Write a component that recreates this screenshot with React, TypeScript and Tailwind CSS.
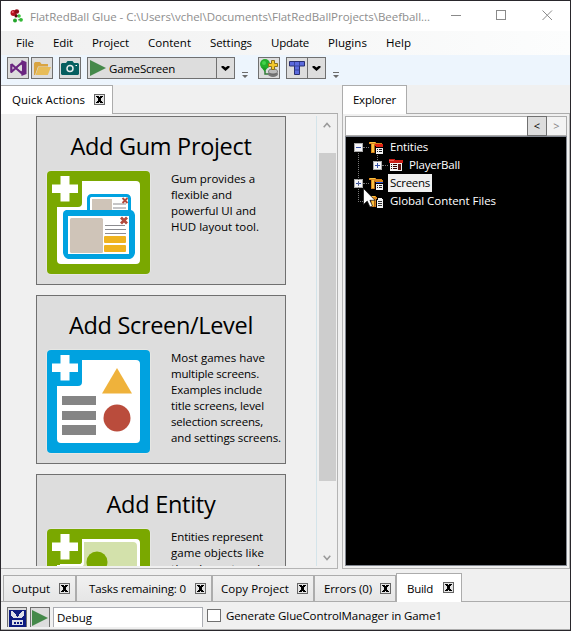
import { useLayoutEffect, useRef, type ReactNode } from "react";

/** One line of text whose tracking is fitted to a given width. */
function Fit({ w, className = "", children }: { w: number; className?: string; children: string }) {
  const ref = useRef<HTMLSpanElement>(null);
  useLayoutEffect(() => {
    const el = ref.current;
    if (!el) return;
    el.style.letterSpacing = "0px";
    const natural = el.getBoundingClientRect().width;
    el.style.letterSpacing = `${(w - natural) / children.length}px`;
  }, [w, children]);
  return (
    <span ref={ref} className={`inline-block shrink-0 whitespace-pre ${className}`}>
      {children}
    </span>
  );
}

function CloseBox() {
  return (
    <span className="flex h-[11px] w-[11px] shrink-0 items-center justify-center border border-[#666] bg-[#e4e4e4]">
      <svg width="7" height="7" viewBox="0 0 7 7" shapeRendering="crispEdges">
        <path d="M0 0h3v1h1V0h3v1H6v1H5v3h1v1h1v1H4V6H3v1H0V6h1V5h1V2H1V1H0z" fill="#000" />
      </svg>
    </span>
  );
}

function ToolButton({ children, className = "" }: { children: ReactNode; className?: string }) {
  return (
    <div className={`flex h-[22px] shrink-0 items-center justify-center border border-[#707070] bg-[#ddd] ${className}`}>
      {children}
    </div>
  );
}

function DropArrow() {
  return (
    <svg width="9" height="5" viewBox="0 0 9 5">
      <path d="M.5 0h2l2 1.600L6.500 0h2v1.500L4.500 5l-4-3.500z" fill="#000" />
    </svg>
  );
}

function Overflow({ className = "" }: { className?: string }) {
  return (
    <svg className={className} width="7" height="7" viewBox="0 0 7 7">
      <path d="M0 0h6v1H0zM0 3h6L3 6z" fill="#6b6b6b" />
    </svg>
  );
}

function Play() {
  return (
    <svg className="shrink-0" width="16" height="16" viewBox="0 0 16 16">
      <path d="M0 0v16l16-8z" fill="#45894a" />
    </svg>
  );
}

function TitleBar() {
  return (
    <div className="flex h-[30px] items-center bg-white pl-[9px] pb-px">
      <svg width="13" height="14" viewBox="0 0 13 14">
        <path d="M5 4l4 4M8 11l3-1" stroke="#666" strokeWidth="1" />
        <circle cx="3.500" cy="4" r="3" fill="#b51220" />
        <circle cx="6.800" cy="2.500" r="2.300" fill="#8d0c17" />
        <circle cx="2.800" cy="3" r="1" fill="#ec6770" />
        <circle cx="9" cy="7" r="1.800" fill="#38c43c" />
        <circle cx="5" cy="11.500" r="2" fill="#24a52c" />
        <circle cx="11" cy="10.800" r="1.900" fill="#32b936" />
        <circle cx="6" cy="7" r="1.500" fill="#5d0a10" />
      </svg>
      <Fit w={400} className="ml-[7px] mt-[2px] text-[11.5px] leading-4 text-[#8e8e8e]">
        {"FlatRedBall Glue - C:\\Users\\vchel\\Documents\\FlatRedBallProjects\\Beefball..."}
      </Fit>
      <svg className="ml-[21px]" width="102" height="11" viewBox="0 0 102 11" fill="none" stroke="#8a8a8a">
        <path d="M0 5.500h10M45.500.5h9v9h-9z" shapeRendering="crispEdges" />
        <path d="M91.500.5l9.500 9.500M101 .5l-9.500 9.500" />
      </svg>
    </div>
  );
}

function MenuBar() {
  return (
    <div className="flex h-6 items-center bg-gradient-to-r from-[#f0f0f0] to-[#fcfdfd] pl-[15px] text-[11.5px] leading-4">
      <Fit w={18}>File</Fit>
      <Fit w={20} className="ml-[19px]">Edit</Fit>
      <Fit w={37} className="ml-[19px]">Project</Fit>
      <Fit w={43} className="ml-[19px]">Content</Fit>
      <Fit w={42} className="ml-[19px]">Settings</Fit>
      <Fit w={38} className="ml-[19px]">Update</Fit>
      <Fit w={39} className="ml-[19px]">Plugins</Fit>
      <Fit w={25} className="ml-[19px]">Help</Fit>
    </div>
  );
}

function ToolBar() {
  return (
    <div className="flex h-[30px] items-start bg-[#edf5fd] pl-[6px] pt-[2px]">
      <ToolButton className="w-[22px]">
        <svg width="17" height="16" viewBox="0 0 17 16">
          <path d="M1.300 4v8L12 2.500v11L1.300 4" fill="none" stroke="#6b2680" strokeWidth="2.200" strokeLinejoin="round" />
          <path d="M11.500 0L16.500 2v12l-5 2z" fill="#6b2680" />
          <path d="M12 4.500L8 8l4 3.500z" fill="#ddd" />
        </svg>
      </ToolButton>
      <ToolButton className="ml-[2px] w-[22px]">
        <svg width="17" height="13" viewBox="0 0 17 13">
          <path d="M0 13V1.500L1 0h5l1.500 2H14v2.500H4L1 13z" fill="#d9a441" />
          <path d="M4.500 5H17l-3.200 8H1.500z" fill="#e8bc57" />
        </svg>
      </ToolButton>
      <ToolButton className="ml-[6px] w-[22px]">
        <svg width="18" height="14" viewBox="0 0 18 14">
          <path d="M1 2h4l1.500-2h5L13 2h4l1 1v10l-1 1H1l-1-1V3z" fill="#075f60" />
          <circle cx="9" cy="7.500" r="3" fill="none" stroke="#e8eded" strokeWidth="1.500" />
          <path d="M14.500 4h1.500v1h-1.500z" fill="#fff" />
        </svg>
      </ToolButton>
      <ToolButton className="ml-[6px] w-[148px]">
        <div className="flex h-full w-[129px] shrink-0 items-center border-r border-[#707070] pl-[2px]">
          <Play />
          <Fit w={66} className="ml-[3px] mt-[2px] text-[11.5px] leading-4">GameScreen</Fit>
        </div>
        <div className="flex flex-1 justify-center"><DropArrow /></div>
      </ToolButton>
      <Overflow className="ml-[7px] mt-[15px]" />
      <ToolButton className="ml-[9px] w-[22px]">
        <svg width="20" height="19" viewBox="0 0 20 19">
          <circle cx="6" cy="5" r="5" fill="#23ae2b" />
          <circle cx="5" cy="4" r="2" fill="#43d34a" />
          <path d="M2 8l4 5 2-4z" fill="#1d9a25" />
          <path d="M6 12v3h5" fill="none" stroke="#347c3a" strokeWidth="1.500" />
          <ellipse cx="14" cy="15" rx="5" ry="3" fill="#777" />
          <ellipse cx="14" cy="12.500" rx="4.500" ry="2.500" fill="#bbb" stroke="#555" strokeWidth=".7" />
          <path d="M12.500 1.500h3v3h3v3h-3v3h-3v-3h-3v-3h3z" fill="#f3c72c" stroke="#8c721c" />
        </svg>
      </ToolButton>
      <ToolButton className="ml-[6px] w-[40px]">
        <div className="flex h-full w-[21px] items-center justify-center border-r border-[#707070]">
          <svg width="16" height="14" viewBox="0 0 16 14">
            <path d="M.5.500h15v4.500h-5v8.500h-5V5h-5z" fill="#5b6ade" stroke="#292f70" />
            <path d="M5.500 1v4h5V1M5.500 9h5" fill="none" stroke="#39449d" />
          </svg>
        </div>
        <div className="flex flex-1 justify-center"><DropArrow /></div>
      </ToolButton>
      <Overflow className="ml-[7px] mt-[15px]" />
    </div>
  );
}

function PlusFrame({ color, children }: { color: string; children: ReactNode }) {
  return (
    <svg width="105" height="105" viewBox="0 0 105 105">
      <rect x=".5" y=".5" width="104" height="104" rx="4.500" fill="#eef0ea" />
      <rect x="1" y="1" width="103" height="103" rx="4" fill={color} />
      <path d="M36 11h54q4 0 4 4v75q0 4-4 4H15q-4 0-4-4V37h21q4 0 4-4z" fill="#fff" />
      <path d="M14.500 6h9v8.500H32v8.500h-8.500v8.500h-9V23H6v-8.500h8.500z" fill="#fff" />
      {children}
    </svg>
  );
}

function GumIcon() {
  return (
    <PlusFrame color="#7aa800">
      <rect x="42.500" y="25.500" width="41" height="30" rx="3" fill="#fff" stroke="#00a2e0" strokeWidth="3" />
      <path d="M46 29h20v14H46z" fill="#cfc4b8" />
      <path d="M67 34h13M67 38h13" stroke="#8c8c90" />
      <path d="M76.500 28l5 5M81.500 28l-5 5" stroke="#b34a3c" strokeWidth="1.800" />
      <path d="M20 40h64q4 0 5 5v38q-1 5-5 6H22q-4-1-5-6V44q0-3 3-4z" fill="#00a2e0" />
      <path d="M22 46h61v38H22z" fill="#fff" />
      <rect x="24" y="48" width="33" height="35" rx="1.500" fill="#cfc4b8" />
      <path d="M59 55.500h20M59 59.500h21M59 63.500h21" stroke="#8c8c90" />
      <path d="M75 47.500l6 6M81 47.500l-6 6" stroke="#b34a3c" strokeWidth="2.800" />
      <rect x="58" y="66" width="22" height="7" rx="1" fill="#efb31f" />
      <rect x="58" y="75" width="22" height="7" rx="1" fill="#efb31f" />
    </PlusFrame>
  );
}

function ScreenIcon() {
  return (
    <PlusFrame color="#00a2e0">
      <path d="M71 19l15 25.500H56z" fill="#efb23b" />
      <circle cx="71" cy="69" r="13.500" fill="#ba4c3c" />
      <path d="M16 47h34v9H16zM16 62h34v9H16zM16 76h34v10H16z" fill="#858585" />
    </PlusFrame>
  );
}

function EntityIcon() {
  return (
    <PlusFrame color="#7aa800">
      <path d="M38 14h49q4 0 4 4v73H14V39h20q4 0 4-4z" fill="#d3e1ab" />
      <path d="M14 36h20q3-1 3-4v4q0 3-3 3H14z" fill="#fff" />
      <circle cx="51" cy="34" r="10.500" fill="#7aa800" />
    </PlusFrame>
  );
}

type Line = [string, number];

function Card({ title, titleWidth, icon, lines }: { title: string; titleWidth: number; icon: ReactNode; lines: Line[] }) {
  return (
    <div className="h-[169px] w-[250px] shrink-0 border border-[#707070] bg-[#ddd]">
      <div className="flex h-[53px] justify-center pt-[13px]">
        <Fit w={titleWidth} className="text-[23.5px] leading-8">{title}</Fit>
      </div>
      <div className="flex">
        <div className="ml-[9px] w-[105px] shrink-0">{icon}</div>
        <div className="ml-[20px] mt-px flex flex-col items-start text-[11.5px] leading-4">
          {lines.map(([text, w]) => <Fit key={text} w={w}>{text}</Fit>)}
        </div>
      </div>
    </div>
  );
}

function QuickActions() {
  return (
    <div className="flex w-[337px] shrink-0 flex-col">
      <div className="flex h-[29px] shrink-0">
        <div className="flex w-[112px] items-center border-t border-r border-[#acacac] bg-white pl-[11px]">
          <Fit w={73} className="text-[11.5px] leading-4">Quick Actions</Fit>
          <div className="ml-[9px] -mt-px"><CloseBox /></div>
        </div>
        <div className="flex-1 border-b border-[#acacac]" />
      </div>
      <div className="flex h-[455px] border-r border-b border-[#b4b4b4] pt-[2px] pb-[2px]">
        <div className="flex w-[315px] shrink-0 flex-col gap-[10px] overflow-hidden pl-[35px]">
          <Card title="Add Gum Project" titleWidth={181} icon={<GumIcon />}
            lines={[["Gum provides a", 84], ["flexible and", 61], ["powerful UI and", 85], ["HUD layout tool.", 88]]} />
          <Card title="Add Screen/Level" titleWidth={184} icon={<ScreenIcon />}
            lines={[["Most games have", 94], ["multiple screens.", 88], ["Examples include", 91], ["title screens, level", 93], ["selection screens,", 92], ["and settings screens.", 110]]} />
          <Card title="Add Entity" titleWidth={109} icon={<EntityIcon />}
            lines={[["Entities represent", 92], ["game objects like", 93], ["the characters in", 97]]} />
        </div>
        <div className="flex w-[20px] flex-col items-center border-l border-[#d4e4ea] pl-px">
          <svg className="mt-[6px] shrink-0" width="8" height="6" viewBox="0 0 8 6" fill="none">
            <path d="M.7 5.300L4 1.500l3.300 3.800" stroke="#999" strokeWidth="1.500" />
          </svg>
          <div className="mt-[25px] h-[328px] w-[17px] shrink-0 bg-[#cdcdcd]" />
          <svg className="mt-[74px] shrink-0" width="8" height="6" viewBox="0 0 8 6" fill="none">
            <path d="M.7.700L4 4.500 7.300.700" stroke="#999" strokeWidth="1.500" />
          </svg>
        </div>
      </div>
    </div>
  );
}

function Expander({ open }: { open?: boolean }) {
  return (
    <svg className="shrink-0" width="9" height="9" viewBox="0 0 9 9" shapeRendering="crispEdges">
      <path d="M.5.500h8v8h-8z" fill="#f5f5f8" stroke="#aaa" />
      <path d={open ? "M2 4.500h5" : "M2 4.500h5M4.500 2v5"} stroke="#3350a8" />
    </svg>
  );
}

function FolderIcon({ kind }: { kind: "entity" | "screen" | "file" }) {
  return (
    <svg className="shrink-0" width="15" height="13" viewBox="0 0 15 13" shapeRendering="crispEdges">
      <path d="M0 1h6l1 1h6v2H7v8H2V3H0z" fill="#d9861c" />
      <path d="M1 1h5v1H1zM3 3h2v8H3z" fill="#f8c340" />
      <path d="M5 4h1v8H5z" fill="#a85a12" />
      {kind === "file" ? (
        <>
          <path d="M8 2h5v2H8z" fill="#000" />
          <path d="M9 3h3l2 2v8H8V5h1z" fill="#f2f2f2" />
          <path d="M9 6h4v1H9zM9 8h4v1H9zM9 10h4v1H9z" fill="#333" />
        </>
      ) : (
        <>
          <path d="M6 3h8v2H6z" fill={kind === "entity" ? "#e02414" : "#d9861c"} />
          <path d="M6 5h9v8H6z" fill="#000" />
          <path d="M7 7h7v6H7z" fill="#f2f2f2" />
          <path d="M7 5h7v1H7z" fill={kind === "entity" ? "#e02414" : "#2a50d8"} />
          <path d="M8 8h1v1H8zM10 8h3v1h-3zM8 10h1v1H8zM10 10h3v1h-3z" fill="#222" />
        </>
      )}
    </svg>
  );
}

function EntityTreeIcon() {
  return (
    <svg className="shrink-0" width="14" height="12" viewBox="0 0 14 12" shapeRendering="crispEdges">
      <path d="M0 0h5l1 1h8v3H0z" fill="#c91c16" />
      <path d="M0 1h5v1H0z" fill="#f0584a" />
      <path d="M1 4h12v8H1z" fill="#f2f2f2" />
      <path d="M2 5h1v1H2zM4 5h4v1H4zM2 7h1v1H2zM4 7h4v1H4zM2 9h1v1H2zM4 9h4v1H4z" fill="#300" />
      <path d="M9 5h3v6H9z" fill="#5e1412" />
    </svg>
  );
}

const dots = "shrink-0 border-t border-dotted border-[#777]";

function Explorer() {
  return (
    <div className="ml-[4px] flex w-[228px] shrink-0 flex-col">
      <div className="flex h-[29px] shrink-0">
        <div className="flex w-[65px] items-center border-t border-x border-[#acacac] bg-white pl-[10px]">
          <Fit w={43} className="text-[11.5px] leading-4">Explorer</Fit>
        </div>
        <div className="flex-1 border-b border-[#acacac]" />
      </div>
      <div className="flex h-[455px] flex-col border-x border-b border-[#b4b4b4] px-[2px] pt-[2px] pb-[2px]">
        <div className="flex h-5 shrink-0 border border-[#acacac] bg-white">
          <div className="flex-1" />
          <div className="-my-px flex w-[20px] items-center justify-center border border-[#707070] bg-[#ddd] text-[11px] leading-4">&lt;</div>
          <div className="flex w-[19px] items-center justify-center bg-[#f3f3f3] text-[11px] leading-4 text-[#838383]">&gt;</div>
        </div>
        <div className="relative flex flex-1 flex-col border border-[#828790] bg-black pl-[8px] pt-[1px] text-[11.5px] leading-4 text-white">
          <div className="absolute left-[12px] top-[16px] h-[49px] border-l border-dotted border-[#777]" />
          <div className="absolute left-[31px] top-[18px] h-[7px] border-l border-dotted border-[#777]" />
          <div className="flex h-[18px] items-center">
            <Expander open /><div className={`w-[6px] ${dots}`} /><FolderIcon kind="entity" />
            <Fit w={38} className="ml-[6px] mb-px">Entities</Fit>
          </div>
          <div className="flex h-[18px] items-center pl-[19px]">
            <Expander /><div className={`mr-px w-[6px] ${dots}`} /><EntityTreeIcon />
            <Fit w={51} className="ml-[6px] mb-px">PlayerBall</Fit>
          </div>
          <div className="flex h-[18px] items-center">
            <Expander /><div className={`w-[6px] ${dots}`} /><FolderIcon kind="screen" />
            <div className="ml-[4px] flex h-[18px] w-[44px] items-center bg-[#f0f0f0] pl-[2px] text-black">
              <Fit w={40} className="mb-px">Screens</Fit>
            </div>
          </div>
          <div className="flex h-[18px] items-center">
            <div className={`ml-[4px] w-[11px] ${dots}`} /><FolderIcon kind="file" />
            <Fit w={106} className="ml-[6px] mb-px">Global Content Files</Fit>
          </div>
          <svg className="absolute left-[17px] top-[51px]" width="13" height="20" viewBox="0 0 13 20">
            <path d="M.5.500V16.500L4.200 13l2.800 6 2.500-1-2.600-5.700H12z" fill="#fff" stroke="#111" strokeWidth=".7" />
          </svg>
        </div>
      </div>
    </div>
  );
}

function BottomTab({ label, w, className }: { label: string; w: number; className: string }) {
  return (
    <div className={`flex items-center border-t border-r border-[#acacac] ${className}`}>
      <Fit w={w} className="mt-px text-[11.5px] leading-4">{label}</Fit>
      <div className="ml-auto -mt-px"><CloseBox /></div>
    </div>
  );
}

function BottomPanel() {
  const idle = "mt-[2px] h-[27px] border-b bg-gradient-to-b from-[#f1f1f1] to-[#e6e6e6]";
  return (
    <div className="flex flex-col">
      <div className="mt-[4px] flex h-[29px]">
        <div className="w-[2px] border-b border-[#acacac]" />
        <BottomTab label="Output" w={38} className={`w-[73px] border-l pl-[8px] pr-[5px] ${idle}`} />
        <BottomTab label="Tasks remaining: 0" w={97} className={`w-[136px] border-l pl-[12px] pr-[5px] ${idle}`} />
        <BottomTab label="Copy Project" w={68} className={`w-[102px] border-l pl-[8px] pr-[5px] ${idle}`} />
        <BottomTab label="Errors (0)" w={48} className={`w-[82px] border-l pl-[9px] pr-[4px] ${idle}`} />
        <BottomTab label="Build" w={26} className="w-[66px] border-l bg-white pl-[10px] pr-[7px]" />
        <div className="flex-1 border-b border-[#acacac]" />
      </div>
      <div className="flex h-[28px] items-start border-b border-[#acacac] pt-[5px] pl-[6px]">
        <div className="flex h-[20px] w-[20px] items-start justify-center border-x border-t border-[#707070] bg-[#ddd] pt-[2px]">
          <svg width="17" height="17" viewBox="0 0 17 17" shapeRendering="crispEdges">
            <path d="M0 0h17v17H0z" fill="#0d1b80" />
            <path d="M2 1h2l4.500 5L13 1h2v5l-2 1v1H4V7L2 6zM3 10h11v5H3z" fill="#dddfe8" />
            <path d="M4 1h9L8.500 7z" fill="#0d1b80" />
            <path d="M5 12h2v2H5zM8 12h2v2H8zM11 12h2v2h-2z" fill="#0d1b80" />
          </svg>
        </div>
        <div className="ml-[3px] flex h-[20px] w-[20px] items-start border-x border-t border-[#707070] bg-[#ddd] pl-[1px] pt-[2px]"><Play /></div>
        <div className="ml-[3px] flex h-[20px] w-[150px] items-start border-x border-t border-[#abadb3] bg-white pl-[3px] pt-[2px] text-[11.5px] leading-4">
          <Fit w={35}>Debug</Fit>
        </div>
        <div className="ml-[4px] mt-[2px] h-[13px] w-[14px] shrink-0 border border-[#707070] bg-white" />
        <Fit w={216} className="ml-[5px] mt-px text-[11.5px] leading-4">Generate GlueControlManager in Game1</Fit>
      </div>
    </div>
  );
}

export default function App() {
  return (
    <div className="flex h-[631px] w-[571px] flex-col overflow-hidden border border-[#29272c] bg-[#f0f0f0] font-['Open_Sans','Noto_Sans',sans-serif] text-black">
      <TitleBar />
      <MenuBar />
      <ToolBar />
      <div className="flex h-[484px] shrink-0">
        <QuickActions />
        <Explorer />
      </div>
      <BottomPanel />
    </div>
  );
}
